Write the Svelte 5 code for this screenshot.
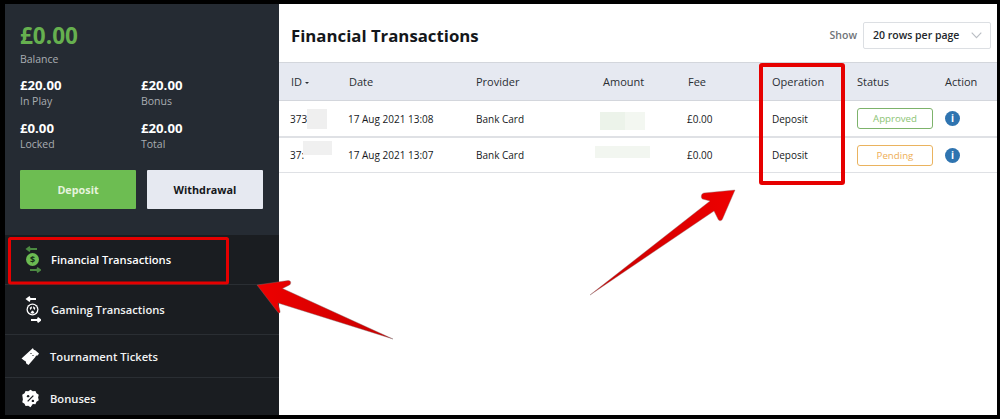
<script>
  const stats = [
    { value: '£20.00', label: 'In Play' },
    { value: '£20.00', label: 'Bonus' },
    { value: '£0.00', label: 'Locked' },
    { value: '£20.00', label: 'Total' }
  ];
  const cols = ['Date', 'Provider', 'Amount', 'Fee', 'Operation', 'Status', 'Action'];
  const rows = [
    { id: '373', date: '17 Aug 2021 13:08', status: 'Approved', kind: 'approved', cover: 'a' },
    { id: '37:', date: '17 Aug 2021 13:07', status: 'Pending', kind: 'pending', cover: 'b' }
  ];
</script>

<div class="frame">
  <div class="shell">
    <aside class="side">
      <section class="wallet">
        <div class="balance">£0.00</div>
        <div class="lbl">Balance</div>
        <div class="stats">
          {#each stats as s}
            <div class="stat">
              <div class="val">{s.value}</div>
              <div class="lbl">{s.label}</div>
            </div>
          {/each}
        </div>
        <div class="btns">
          <button class="btn green">Deposit</button>
          <button class="btn light">Withdrawal</button>
        </div>
      </section>
      <nav class="nav">
        <div class="item first">
          <svg class="ico tall" viewBox="0 0 16 27" aria-hidden="true">
            <path d="M12 3H2.500M5 .8 2 3l3 2.200" fill="none" stroke="#4c8a42" stroke-width="1.800"/>
            <circle cx="7.500" cy="13.500" r="6.500" fill="#6cbb52"/>
            <text x="7.500" y="16.700" class="dollar">$</text>
            <path d="M5 24h9.500M12 21.800l3 2.200-3 2.200" fill="none" stroke="#4c8a42" stroke-width="1.800"/>
          </svg>
          <span>Financial Transactions</span>
        </div>
        <div class="item second">
          <svg class="ico tall" viewBox="0 0 16 27" aria-hidden="true">
            <path d="M11 3H2M5 .8 2 3l3 2.200" fill="none" stroke="#fff" stroke-width="1.800"/>
            <circle cx="7.500" cy="13.500" r="6" fill="#fff"/>
            <circle cx="7.500" cy="13.500" r="4.700" fill="#1a1d21"/>
            <path d="M4.700 11.800 7 10.300l-.3 2.300-1.500 1.300zM10.300 11.800 8 10.300l.3 2.300 1.500 1.300zM5.500 17l1.400-2.200h1.200L9.500 17l-2 .8z" fill="#fff"/>
            <path d="M6 24h9M12.500 21.800l3 2.200-3 2.200" fill="none" stroke="#fff" stroke-width="1.800"/>
          </svg>
          <span>Gaming Transactions</span>
        </div>
        <div class="item third">
          <svg class="ico" viewBox="0 0 19 19" aria-hidden="true">
            <path d="M12 1c.1 1.300.9 2 2.200 2.200L18 6.500l-1.300 2c-1.200-.2-2 .3-2.300 1.500L7.500 18 5 16.300c.3-1.300-.2-2.200-1.500-2.500L.5 11.500z" fill="#fff"/>
            <path d="m9.500 6 1 1M11.500 8l1 1" stroke="#1a1d21" stroke-width="1"/>
          </svg>
          <span>Tournament Tickets</span>
        </div>
        <div class="item fourth">
          <svg class="ico" viewBox="0 0 20 20" aria-hidden="true">
            <path d="m10 .8 2.400 1.500 2.800-.3 1.100 2.600 2.400 1.500-.7 2.900.7 2.900-2.400 1.500-1.100 2.600-2.800-.3L10 19.200l-2.400-1.500-2.800.3-1.100-2.600-2.400-1.500.7-2.900L1.300 6.100l2.400-1.500L4.800 2l2.800.3z" fill="#fff"/>
            <path d="m7 13 6-6" stroke="#1a1d21" stroke-width="1.400"/>
            <circle cx="7.500" cy="7.500" r="1.300" fill="#1a1d21"/>
            <circle cx="12.500" cy="12.500" r="1.300" fill="#1a1d21"/>
          </svg>
          <span>Bonuses</span>
        </div>
      </nav>
    </aside>

    <main class="main">
      <header class="head">
        <h1>Financial Transactions</h1>
        <div class="show">
          <span>Show</span>
          <div class="select">
            <span>20 rows per page</span>
            <svg width="11" height="7" viewBox="0 0 11 7" aria-hidden="true"><path d="m.7.7 4.800 5 4.800-5" fill="none" stroke="#b9bdc3" stroke-width="1.100"/></svg>
          </div>
        </div>
      </header>

      <div class="row thead">
        <div>ID <i class="sort"></i></div>
        {#each cols as c}<div>{c}</div>{/each}
      </div>

      {#each rows as r}
        <div class="row tr tr-{r.cover}">
          <div class="idcell">{r.id}<i class="cover id-{r.cover}"></i></div>
          <div class="nudge">{r.date}</div>
          <div>Bank Card</div>
          <div class="amount"><i class="cover am-{r.cover}"></i></div>
          <div class="nudge">£0.00</div>
          <div>Deposit</div>
          <div><span class="badge {r.kind}">{r.status}</span></div>
          <div><span class="info">i</span></div>
        </div>
      {/each}
    </main>
  </div>

  <svg class="marks" viewBox="0 0 1000 419" width="1000" height="419" aria-hidden="true">
    <defs>
      <linearGradient id="g1" x1="0" y1="0" x2="1" y2="0">
        <stop offset="0" stop-color="#ee0000"/><stop offset="1" stop-color="#c80000"/>
      </linearGradient>
      <linearGradient id="g2" x1="1" y1="0" x2="0" y2="0">
        <stop offset="0" stop-color="#ee0000"/><stop offset="1" stop-color="#c80000"/>
      </linearGradient>
    </defs>
    <rect x="9.500" y="238.500" width="218" height="44.500" rx="1" fill="none" stroke="#e60000" stroke-width="3"/>
    <rect x="761" y="65" width="82" height="118" rx="1" fill="none" stroke="#e60000" stroke-width="4"/>
    <path d="M393 339 278 303l2 8c.5 2-1 2.500-2 1.500L257 285l31-4.500c3-.3 3.500 3 1.500 4.500l-7 3.500z" fill="url(#g1)" stroke="#7a6a6a" stroke-width=".4"/>
    <path d="m590 295 124-84 4 8c1 2.500 3.500 2 4.500 0L735 190l-31 3c-3 .3-3.500 5-1.500 6l7.500 2z" fill="url(#g2)" stroke="#8a7070" stroke-width=".4"/>
  </svg>
</div>

<style>
  :global(body) { margin: 0; background: #000; }
  .frame {
    position: relative;
    width: 1000px;
    height: 419px;
    box-sizing: border-box;
    padding: 4px 3px 4px 5px;
    background: #000;
    font-family: "Open Sans", "Noto Sans", sans-serif;
    overflow: hidden;
  }
  .shell { display: flex; height: 100%; background: #fff; }
  .side { width: 274px; display: flex; flex-direction: column; background: #1a1d21; color: #fff; }
  .wallet {
    height: 231px;
    box-sizing: border-box;
    padding: 15px 16px 0 15px;
    background: #252b33;
  }
  .balance { font-size: 22.500px; line-height: 33px; font-weight: 700; color: #66b04f; }
  .lbl { font-size: 10.500px; line-height: 14px; color: #a9adb2; }
  .stats {
    display: grid;
    grid-template-columns: 121px 1fr;
    row-gap: 13px;
    margin-top: 12px;
  }
  .stat .val { font-size: 13.200px; line-height: 15px; margin-bottom: 1px; font-weight: 700; color: #fff; }
  .btns { display: flex; gap: 11px; margin-top: 19px; }
  .btn {
    width: 116px;
    height: 39px;
    border: 0;
    border-radius: 1px;
    font-family: inherit;
    font-size: 10.800px;
    font-weight: 700;
    padding: 0;
  }
  .green { background: #6dbd52; color: #e5f3dd; }
  .light { background: #e6e9f1; color: #14171b; }
  .nav { flex: 1; display: flex; flex-direction: column; }
  .item {
    display: flex;
    align-items: center;
    gap: 10px;
    box-sizing: border-box;
    border-bottom: 1px solid #2a2e33;
    font-size: 11.200px;
    font-weight: 600;
    color: #f2f3f4;
  }
  .first, .second { padding-left: 20px; }
  .first { height: 50px; color: #fff; }
  .second { height: 50px; }
  .third { height: 43px; padding-left: 16px; }
  .fourth { flex: 1; padding-left: 16px; border-bottom: 0; padding-top: 3px; }
  .ico { width: 19px; height: 19px; flex: none; }
  .ico.tall { width: 16px; height: 27px; }
  .dollar { font-size: 9px; font-weight: 700; text-anchor: middle; fill: #16321a; }

  .main { flex: 1; min-width: 0; }
  .head {
    height: 58px;
    box-sizing: border-box;
    display: flex;
    align-items: center;
    justify-content: space-between;
    padding: 5px 6px 0 12px;
  }
  h1 { margin: 0; font-size: 16.800px; font-weight: 700; color: #14171b; }
  .show { display: flex; align-items: center; gap: 6px; font-size: 10.500px; font-weight: 600; color: #6f7378; margin-top: -1px; }
  .select {
    width: 128px;
    height: 27px;
    box-sizing: border-box;
    display: flex;
    align-items: center;
    justify-content: space-between;
    padding: 0 8px 0 9px;
    border: 1px solid #dcdfe3;
    border-radius: 2px;
    font-size: 10.500px;
    font-weight: 600;
    color: #22262b;
  }
  .row {
    display: grid;
    grid-template-columns: 58px 127px 127px 85px 84px 85px 88px 1fr;
    align-items: center;
    box-sizing: border-box;
    padding-left: 12px;
  }
  .thead {
    height: 39px;
    background: #e6e9f1;
    border-top: 1px solid #d3d6dc;
    border-bottom: 1px solid #d3d6dc;
    font-size: 11px;
    color: #2a2e33;
  }
  .sort {
    display: inline-block;
    margin: 0 0 2px 0;
    border: 2.500px solid transparent;
    border-top-color: #2a2e33;
    border-bottom: 0;
  }
  .tr {
    font-size: 10px;
    font-weight: 500;
    color: #15181c;
    border-bottom: 1px solid #dfe1e5;
  }
  .tr-a { height: 37px; border-bottom-width: 2px; }
  .tr-b { height: 35px; }
  .nudge, .idcell { margin-left: -1px; }
  .idcell, .amount { position: relative; height: 100%; display: flex; align-items: center; }
  .cover { position: absolute; display: block; }
  .id-a { left: 17px; top: 8px; width: 20px; height: 20px; background: #efefef; }
  .id-b { left: 13px; top: 3px; width: 29px; height: 14px; background: #f0f0f0; }
  .am-a { left: -3px; top: 11px; width: 45px; height: 18px; background: linear-gradient(90deg, #ecf3ea 55%, #f3f7f1 55%); }
  .am-b { left: -8px; top: 8px; width: 55px; height: 12px; background: #f2f6f0; }
  .badge {
    display: block;
    width: 76px;
    height: 21px;
    box-sizing: border-box;
    border: 1px solid;
    border-radius: 3px;
    text-align: center;
    font-size: 9.700px;
    line-height: 19px;
  }
  .approved { color: #8cc475; border-color: #7db36b; }
  .pending { color: #eeae55; border-color: #eab35f; }
  .info {
    display: block;
    width: 15px;
    height: 15px;
    border-radius: 50%;
    background: #2f74b0;
    color: #fff;
    font-size: 10px;
    font-weight: 700;
    line-height: 15px;
    text-align: center;
  }
  .marks { position: absolute; left: 0; top: 0; pointer-events: none; }
</style>
